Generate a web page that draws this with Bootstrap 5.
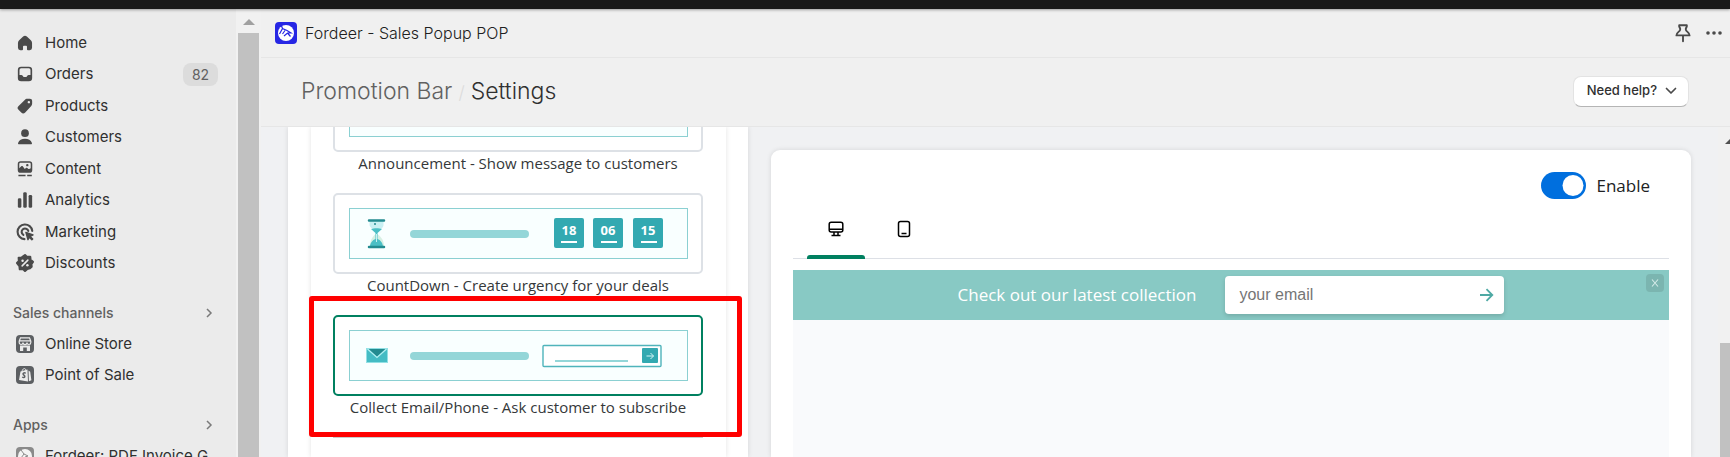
<!DOCTYPE html>
<html lang="en">
<head>
<meta charset="utf-8">
<meta name="viewport" content="width=device-width, initial-scale=1">
<title>Fordeer - Sales Popup POP</title>
<link href="https://cdn.jsdelivr.net/npm/bootstrap@5.3.0/dist/css/bootstrap.min.css" rel="stylesheet">
<style>
  :root { --teal: #33a9b1; --teal-soft: #94d6d8; --green: #008060; }
  body { font-family: Inter, "Liberation Sans", sans-serif; background: #f0f0f0; color: #303030; }
  .top-strip { height: 9px; background: #1a1a1a; box-shadow: 0 1px 3px rgba(0,0,0,.35); z-index: 2; }
  a { color: inherit; text-decoration: none; }

  /* Sidebar */
  .side { width: 236px; background: #ebebeb; padding-top: 18px; gap: 18px; }
  .side-list { display: grid; grid-auto-rows: 1fr; font-size: 15px; }
  .side-main { height: 252px; }
  .side-pair { height: 63px; }
  .side-single { height: 32px; }
  .side-list a { padding-left: 14px; padding-right: 18px; gap: 9px; }
  .side-list svg { width: 22px; height: 22px; color: #4a4a4a; flex: none; }
  .side-head { height: 31px; padding: 0 22px 0 13px; font-size: 14px; font-weight: 500; color: #616161; }
  .pill { background: #dcdcdc; color: #616161; font-size: 14px; border-radius: 8px; width: 35px; line-height: 23px; text-align: center; }
  .scroll-left { width: 25px; background: #f1f1f1; padding: 10px 2px 0 2px; }
  .scroll-left span, .scroll-right span { background: #c1c1c1; }
  .scroll-right span { height: 36%; }

  /* Headers */
  .app-row { height: 49px; padding: 0 8px 0 14px; border-bottom: 1px solid #e6e6e6; font-size: 16px; font-weight: 300; color: #202020; }
  .page-row { height: 69px; padding: 0 41px 0 40px; border-bottom: 1px solid #e6e6e6; }
  .crumbs { font-size: 23px; font-weight: 300; margin: 0; }
  .crumbs a { color: #616161; }
  .crumbs i { color: #dcdcdc; font-size: 18px; font-style: normal; margin: 0 6px; }
  .help-btn { height: 31px; padding: 0 11px 0 13px; gap: 8px; margin-bottom: 2px; background: #fff; border: 1px solid #e3e3e3; border-bottom-color: #b5b5b5; border-radius: 8px; font-size: 13px; font-weight: 500; color: #303030; }
  .icon-btn { background: none; border: 0; padding: 0; line-height: 0; color: #4a4a4a; }

  /* Content */
  .work { background: #f0f1f3; }
  .cols { display: grid; grid-template-columns: 1fr 2fr; gap: 23px; padding: 0 27px; }
  .panel { background: #fff; box-shadow: 0 0 5px rgba(23,24,24,.12); }
  .left-panel { padding: 0 22px 0 23px; }
  .choices { background: #fff; box-shadow: 0 0 5px rgba(23,24,24,.12); padding: 0 23px 0 22px; }
  .choice { display: block; width: 100%; background: none; border: 0; padding: 0; margin-bottom: 19px; text-align: center; font-family: "Open Sans", sans-serif; font-size: 15px; line-height: 22px; color: #35383a; }
  .choices > .choice:first-child { margin-top: -56px; }
  .choice-art { display: block; border: 2px solid #dde1e6; border-radius: 5px; padding: 13px 13px 13px 14px; line-height: 0; }
  .choice.active .choice-art { border-color: var(--green); }
  .choice-art svg { width: 100%; height: 51px; }
  .frame { position: relative; }
  .callout { position: absolute; inset: -19px -39px 0 -24px; border: 5px solid #f00; border-radius: 3px; pointer-events: none; }
  .preview { margin-top: 23px; border-radius: 9px 9px 0 0; padding: 22px 22px 0; }
  .form-switch.enable { padding: 0; gap: 10px; min-height: 27px; margin-right: 19px; font-family: "Open Sans", sans-serif; font-size: 17px; color: #202223; }
  .enable .form-check-input { width: 45px; height: 27px; margin: 0; border: 0; background-size: 28px 28px; }
  .enable .form-check-input:checked { background-color: #006fde; background-position: 18px center; }
  .device-tabs { margin-top: 19px; border-bottom: 1px solid #dde0e6; padding-left: 14px; gap: 10px; }
  .device-tabs button { width: 58px; height: 41px; border: 0; border-bottom: 4px solid transparent; background: none; padding: 0 0 15px; margin-bottom: -1px; display: flex; align-items: center; justify-content: center; color: #000; position: relative; }
  .device-tabs button.active::after { content: ""; position: absolute; left: 0; right: 0; bottom: -4px; height: 4px; background: var(--green); border-radius: 3px 3px 0 0; }
  .promo { margin-top: 11px; height: 50px; background: #88c9c4; gap: 29px; position: relative; }
  .promo p { font-family: "Open Sans", sans-serif; font-size: 17px; color: #fff; margin: 0; }
  .mail { width: 279px; height: 38px; background: #fff; border-radius: 4px; box-shadow: 0 2px 4px rgba(0,0,0,.15); padding: 0 10px 0 14px; }
  .mail input { border: 0; padding: 0; outline: 0; font: 16px "Liberation Sans", Arial, sans-serif; min-width: 0; }
  .mail input::placeholder { color: #757575; }
  .close-x { position: absolute; top: 4px; right: 5px; width: 18px; height: 18px; border: 0; padding: 0; border-radius: 4px; background: #7bb5b0; line-height: 0; }
  .canvas-bg { background: #f9fafc; }
  .scroll-right { width: 12px; background: #f1f1f1; padding: 12px 0 0 2px; }
</style>
</head>
<body>
<div class="vh-100 d-flex flex-column overflow-hidden">
  <div class="top-strip flex-shrink-0 position-relative"></div>
  <div class="d-flex flex-grow-1 overflow-hidden">

    <nav class="side d-flex flex-column flex-shrink-0 overflow-hidden" aria-label="Main">
      <div class="side-list side-main flex-shrink-0">
        <a href="#" class="d-flex align-items-center"><svg viewBox="0 0 20 20" fill="currentColor"><path d="M8.3 4.1a2.5 2.5 0 0 1 3.4 0l3.6 3.4c.7.7 1.1 1.600 1.100 2.600v4.200a2.200 2.200 0 0 1-2.200 2.200h-1.500a.9.9 0 0 1-.9-.9v-2.300a.8.8 0 0 0-.8-.8h-2a.8.8 0 0 0-.8.8v2.300a.9.9 0 0 1-.9.9H5.800a2.200 2.200 0 0 1-2.200-2.200v-4.200c0-1 .4-1.900 1.100-2.600z"/></svg>Home</a>
        <a href="#" class="d-flex align-items-center"><svg viewBox="0 0 20 20" fill="currentColor"><path fill-rule="evenodd" d="M6.500 3.300h7a3 3 0 0 1 3 3v7.400a3 3 0 0 1-3 3h-7a3 3 0 0 1-3-3V6.300a3 3 0 0 1 3-3zm0 1.500A1.500 1.500 0 0 0 5 6.300V11h1.700c.5 0 .9.2 1.200.6l.6.8c.2.200.4.300.7.300h1.600c.3 0 .5-.1.7-.3l.6-.8c.3-.4.7-.6 1.200-.6H15V6.300a1.500 1.500 0 0 0-1.500-1.500z"/></svg>Orders<span class="pill ms-auto">82</span></a>
        <a href="#" class="d-flex align-items-center"><svg viewBox="0 0 20 20" fill="currentColor"><path fill-rule="evenodd" d="M10.700 3.700c.5-.3 1-.4 1.500-.4h2.300a2 2 0 0 1 2 2v2.500c0 .8-.3 1.500-.8 2.100l-5.500 5.900a2.500 2.500 0 0 1-3.600.1l-2.500-2.500a2.400 2.400 0 0 1 .1-3.500zM13.500 7.600a1.100 1.100 0 1 0 0-2.200 1.100 1.100 0 0 0 0 2.200z"/></svg>Products</a>
        <a href="#" class="d-flex align-items-center"><svg viewBox="0 0 20 20" fill="currentColor"><circle cx="10" cy="6.500" r="3.500"/><path d="M3.700 15.400c.9-2.400 3.300-3.700 6.300-3.700s5.400 1.300 6.300 3.700c.2.600-.2 1.300-.9 1.300H4.600c-.7 0-1.100-.7-.9-1.300z"/></svg>Customers</a>
        <a href="#" class="d-flex align-items-center"><svg viewBox="0 0 20 20" fill="currentColor"><path fill-rule="evenodd" d="M6 3h8a2.600 2.600 0 0 1 2.600 2.600v5.300A2.600 2.600 0 0 1 14 13.500H6a2.600 2.600 0 0 1-2.600-2.600V5.600A2.600 2.600 0 0 1 6 3zm0 1.400c-.7 0-1.200.5-1.200 1.200v3.700l1.800-1.700c.5-.4 1.100-.4 1.500.1l1.700 2.200 1-.8c.4-.3.9-.3 1.300 0l1 .8c.5.300 1 .4 2.100-.500V5.600c0-.7-.5-1.200-1.200-1.200zm6.100 3.200a1.100 1.100 0 1 0 0-2.200 1.100 1.100 0 0 0 0 2.200z"/><path d="M4 15.200h6.500v1.500H4zM12 15.200h4.200v1.500H12z"/></svg>Content</a>
        <a href="#" class="d-flex align-items-center"><svg viewBox="0 0 20 20" fill="currentColor"><rect x="3.500" y="8.500" width="3.200" height="8.500" rx="1.200"/><rect x="8.400" y="3" width="3.200" height="14" rx="1.200"/><rect x="13.300" y="5.500" width="3.200" height="11.500" rx="1.200"/></svg>Analytics</a>
        <a href="#" class="d-flex align-items-center"><svg viewBox="0 0 20 20" fill="none" stroke="currentColor" stroke-width="1.900" stroke-linecap="round"><path d="M9.500 16.500A6.700 6.700 0 1 1 16.600 9M8.500 12.600A3.100 3.100 0 1 1 13 9"/><path d="M10.800 10.300l6.500 2.400-2.600 1.300 2.300 2.300-.8.800-2.300-2.300-1.200 2.200z" fill="currentColor" stroke-width="1.200" stroke-linejoin="round"/></svg>Marketing</a>
        <a href="#" class="d-flex align-items-center"><svg viewBox="0 0 20 20"><path fill="currentColor" stroke="currentColor" stroke-width="2" stroke-linejoin="round" d="M10 2.800l1.800 1.700 2.900-.2.300 2.800 2.200 1.900-1.400 2 .2 2.400-1.500 1.300-2.400.6L10 17.200l-1.800-1.700-2.900.2-.3-2.800L2.800 10l1.700-1.800-.2-2.900 2.800-.3z"/><path d="M12.600 7.400l-5.200 5.200" stroke="#ebebeb" stroke-width="1.400" stroke-linecap="round"/><circle cx="7.800" cy="8" r="1.100" fill="#ebebeb"/><circle cx="12.200" cy="12" r="1.100" fill="#ebebeb"/></svg>Discounts</a>
      </div>

      <section class="flex-shrink-0">
        <a href="#" class="side-head d-flex align-items-center justify-content-between">Sales channels <svg width="10" height="10" viewBox="0 0 10 10" fill="none" stroke="#7a7a7a" stroke-width="1.500"><path d="M3 1l4 4-4 4"/></svg></a>
        <div class="side-list side-pair">
          <a href="#" class="d-flex align-items-center"><svg viewBox="0 0 22 22"><rect x="2" y="2" width="18" height="18" rx="4" fill="#5c5f62"/><g fill="none" stroke="#ebebeb" stroke-width="1.200"><path d="M6.500 4.800h9l1.300 3.400v1.400a1.900 1.900 0 0 1-3.800 0 1.900 1.900 0 0 1-4 0 1.900 1.900 0 0 1-3.800 0V8.200zM5.500 7.800h11"/></g><path d="M6 12.500h10V18h-3.200v-3.500H9.200V18H6z" fill="#ebebeb"/></svg>Online Store</a>
          <a href="#" class="d-flex align-items-center"><svg viewBox="0 0 22 22"><rect x="2" y="2" width="18" height="18" rx="4" fill="#5c5f62"/><path d="M6.500 7.500l7-2 .5 12-9-1.400zM14.500 6.500l1.700 1.200 1.200 8.600-2.500 1z" fill="#ebebeb"/><path d="M8 7.500c.5-3 3-4 4-1.500" fill="none" stroke="#ebebeb"/><path d="M11.700 9.200c-2-.9-3 .2-2.500 1.200.4.800 1.700 1 1.600 2.200-.1 1-1.400 1.200-2.600.4" fill="none" stroke="#5c5f62" stroke-width="1.500"/></svg>Point of Sale</a>
        </div>
      </section>

      <section class="flex-shrink-0">
        <a href="#" class="side-head d-flex align-items-center justify-content-between">Apps <svg width="10" height="10" viewBox="0 0 10 10" fill="none" stroke="#7a7a7a" stroke-width="1.500"><path d="M3 1l4 4-4 4"/></svg></a>
        <div class="side-list side-single">
          <a href="#" class="d-flex align-items-center text-nowrap"><svg viewBox="0 0 22 22"><rect x="2" y="2" width="18" height="18" rx="4" fill="#8a8a8a"/><circle cx="11" cy="11" r="7" fill="#f4f4f4"/><path d="M7 5l3 4 4 2-3 1-3 5M10 9l-3 4" fill="none" stroke="#8a8a8a"/></svg>Fordeer: PDF Invoice G...</a>
        </div>
      </section>
    </nav>

    <div class="scroll-left d-flex flex-column align-items-center flex-shrink-0" aria-hidden="true">
      <svg width="12" height="6" viewBox="0 0 12 6" class="flex-shrink-0 mb-2"><path d="M0 6L6 0l6 6z" fill="#a0a0a0"/></svg>
      <span class="w-100 flex-grow-1"></span>
    </div>

    <main class="flex-grow-1 d-flex flex-column overflow-hidden">
      <header class="app-row d-flex align-items-center flex-shrink-0">
        <svg class="me-2" width="22" height="22" viewBox="0 0 22 22"><rect width="22" height="22" rx="4" fill="#2626e4"/><circle cx="11" cy="11" r="8" fill="#fff"/><path d="M6 2.500l1.500 4 4.500 2 4 2.500h-3.500L9 14M7.500 6.500L4.500 12M10 8.500L7.500 12M12.500 11l3 3.500" fill="none" stroke="#2626e4" stroke-width="1.200"/></svg>
        <span>Fordeer - Sales Popup POP</span>
        <button class="icon-btn ms-auto" aria-label="Pin"><svg width="22" height="22" viewBox="0 0 20 20" fill="none" stroke="currentColor" stroke-width="1.700" stroke-linejoin="round" stroke-linecap="round"><path d="M6.500 3h7c.3 2-1 2-1 3.500 0 2.500 3.500 2.500 3.500 5.700H4c0-3.200 3.500-3.200 3.500-5.700C7.500 5 6.200 5 6.500 3zM10 12.500v5"/></svg></button>
        <button class="icon-btn ms-2 ps-1" aria-label="More"><svg width="16" height="22" viewBox="0 0 16 22" fill="currentColor"><circle cx="2" cy="11" r="1.800"/><circle cx="8" cy="11" r="1.800"/><circle cx="14" cy="11" r="1.800"/></svg></button>
      </header>

      <div class="page-row d-flex align-items-center justify-content-between flex-shrink-0">
        <h1 class="crumbs"><a href="#">Promotion Bar</a><i>/</i>Settings</h1>
        <button class="help-btn d-flex align-items-center">Need help? <svg width="12" height="8" viewBox="0 0 12 8" fill="none" stroke="#4a4a4a" stroke-width="1.700" stroke-linecap="round" stroke-linejoin="round"><path d="M1.500 1.500L6 6l4.500-4.500"/></svg></button>
      </div>

      <div class="work d-flex flex-grow-1 overflow-hidden">
        <div class="cols flex-grow-1">
          <section class="panel left-panel d-flex flex-column">
            <div class="choices d-flex flex-column flex-grow-1">
              <button class="choice"><span class="choice-art"><svg viewBox="0 0 339 51"><rect x=".5" y=".5" width="338" height="50" fill="#f9ffff" stroke="#8bd0d2"/></svg></span>Announcement - Show message to customers</button>

              <button class="choice"><span class="choice-art"><svg viewBox="0 0 339 51">
                <rect x=".5" y=".5" width="338" height="50" fill="#f9ffff" stroke="#8bd0d2"/>
                <path d="M20.500 13h14v4c0 3-4 5-6 7-2-2-8-4-8-7z" fill="#c9f0f3"/><path d="M21 38c0-7 4-11 6.500-12.500C30 27 35 31 35 38z" fill="#d8f0e4"/>
                <path d="M22 21c3-1 8-1 11 0l-4.500 4v6c3 1 5.500 4 5.500 8H21c0-4 2.500-7 5.500-8v-6z" fill="#4bbfc5"/><path d="M27.500 26v8" stroke="#c9f0f3"/><circle cx="26" cy="16" r="1" fill="#238b90"/>
                <path d="M20 12.500h15M20 39h15" stroke="#238b90" stroke-width="2.500" stroke-linecap="round"/>
                <rect x="61" y="22" width="119" height="8" rx="4" fill="#94d6d8"/>
                <g fill="#33a9b1"><rect x="205" y="10" width="30" height="30" rx="2"/><rect x="244" y="10" width="30" height="30" rx="2"/><rect x="284" y="10" width="30" height="30" rx="2"/></g>
                <g fill="#fff" font-family="Open Sans, sans-serif" font-size="13" font-weight="700" text-anchor="middle"><text x="220" y="27">18</text><text x="259" y="27">06</text><text x="299" y="27">15</text></g>
                <path d="M212 34h16M252 34h16M292 34h16" stroke="#fff" stroke-width="2"/></svg></span>CountDown - Create urgency for your deals</button>

              <div class="frame">
                <button class="choice active"><span class="choice-art"><svg viewBox="0 0 339 51">
                <rect x=".5" y=".5" width="338" height="50" fill="#f9ffff" stroke="#8bd0d2"/>
                <rect x="17.500" y="18.500" width="21" height="14" fill="#45bcc4" stroke="#92e0e4"/><path d="M19.500 19l8.500 8 8.500-8z" fill="#238b90"/><path d="M18.500 19l9.500 8.500 9.500-8.500" fill="none" stroke="#b2f0f2" stroke-width="1.300"/>
                <rect x="61" y="22" width="119" height="8" rx="4" fill="#94d6d8"/>
                <rect x="194" y="15.500" width="118" height="21" rx="1" fill="#fff" stroke="#4fb4bb" stroke-width="1.400"/>
                <path d="M206 31h73" stroke="#94d6d8" stroke-width="2"/><rect x="293" y="18" width="16" height="15" rx="1" fill="#33a9b1"/>
                <path d="M297.500 26h7M301.500 23l3 3-3 3" fill="none" stroke="#d4f5f6"/></svg></span>Collect Email/Phone - Ask customer to subscribe</button>
                <div class="callout"></div>
              </div>
              <hr class="m-0">
            </div>
          </section>

          <section class="panel preview d-flex flex-column">
            <div class="form-check form-switch enable d-flex align-items-center align-self-end mb-0">
              <input class="form-check-input" type="checkbox" role="switch" id="enable" checked>
              <label for="enable">Enable</label>
            </div>
            <div class="device-tabs d-flex" role="tablist">
              <button class="active" role="tab" aria-label="Desktop" aria-selected="true"><svg width="16" height="16" viewBox="0 0 16 16" fill="none" stroke="currentColor" stroke-width="1.500"><rect x="1.200" y="1.200" width="13.600" height="9.800" rx="2"/><path d="M1 8.300h14M6 11v3M10 11v3M3.500 14.500h9"/></svg></button>
              <button role="tab" aria-label="Mobile"><svg width="16" height="18" viewBox="0 0 16 18" fill="none" stroke="currentColor" stroke-width="1.500"><rect x="2.500" y="1.500" width="11" height="15" rx="2"/><path d="M5.500 13.500h5"/></svg></button>
            </div>
            <div class="promo d-flex align-items-center justify-content-center flex-shrink-0">
              <p>Check out our latest collection</p>
              <form class="mail d-flex align-items-center">
                <input class="flex-grow-1" type="email" placeholder="your email" aria-label="your email">
                <button type="button" class="icon-btn" aria-label="Subscribe"><svg width="15" height="14" viewBox="0 0 15 14" fill="none" stroke="#4ea9a4" stroke-width="1.800"><path d="M1 7h12M7.500 1.200L13.300 7l-5.800 5.800"/></svg></button>
              </form>
              <button class="close-x" aria-label="Close"><svg width="8" height="8" viewBox="0 0 8 8" stroke="#d5ebe9" stroke-width="1.100"><path d="M1 0.500l6 7M7 0.500l-6 7"/></svg></button>
            </div>
            <div class="canvas-bg flex-grow-1"></div>
          </section>
        </div>
        <div class="scroll-right d-flex flex-column flex-shrink-0" aria-hidden="true">
          <svg width="10" height="5" viewBox="0 0 10 5" class="flex-shrink-0"><path d="M5 5l5-5v5z" fill="#505050"/></svg>
          <span class="w-100 mt-auto"></span>
        </div>
      </div>
    </main>
  </div>
</div>
<script src="https://cdn.jsdelivr.net/npm/bootstrap@5.3.0/dist/js/bootstrap.bundle.min.js"></script>
</body>
</html>
